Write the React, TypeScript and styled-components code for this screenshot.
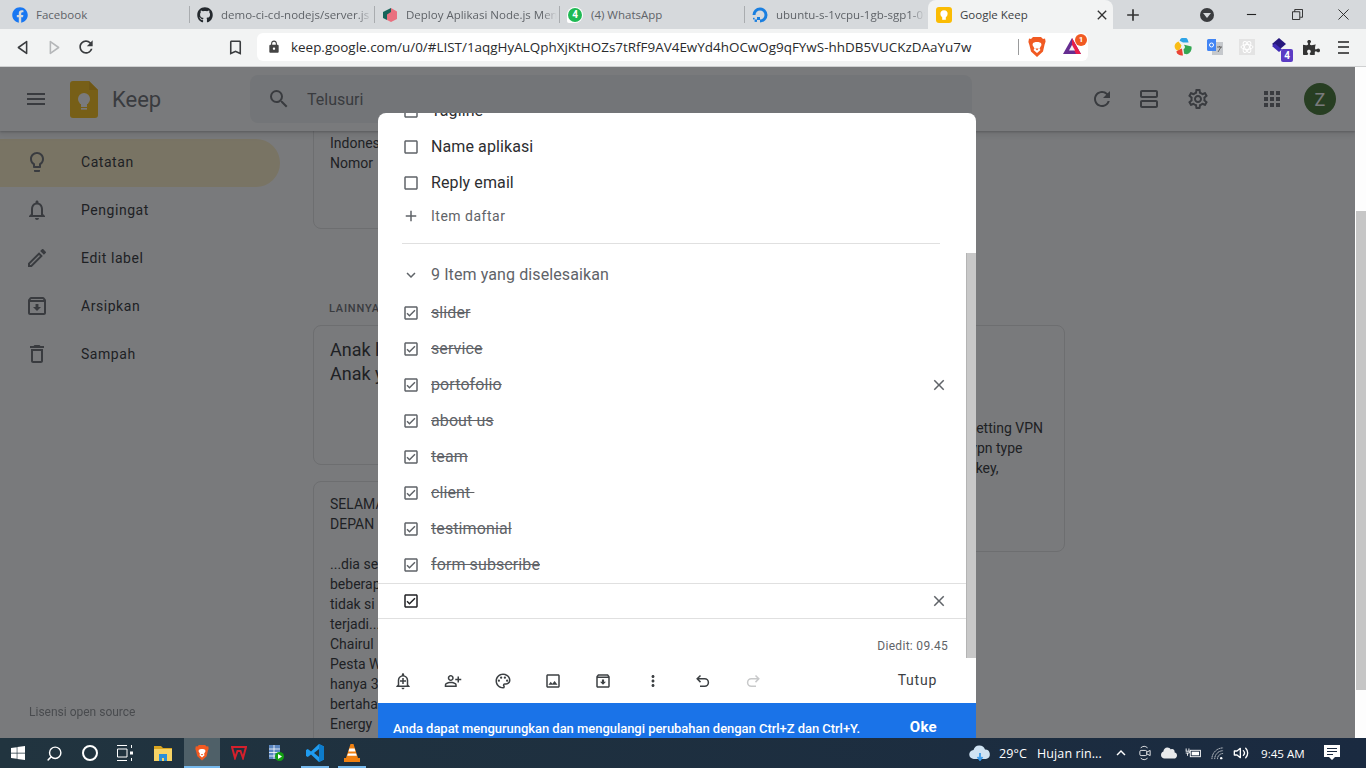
import React from "react";
import styled, { createGlobalStyle } from "styled-components";
import {
  MdMenu, MdSearch, MdLightbulbOutline, MdOutlineNotifications, MdOutlineEdit, MdOutlineArchive,
  MdOutlineDelete, MdRefresh, MdOutlineViewAgenda, MdOutlineSettings, MdApps, MdOutlineAddAlert,
  MdOutlinePersonAddAlt, MdOutlinePalette, MdOutlineImage, MdMoreVert, MdAdd,
  MdExpandMore, MdClose, MdCheckBoxOutlineBlank, MdOutlineCheckBox, MdLock, MdBookmarkBorder,
  MdKeyboardArrowUp,
} from "react-icons/md";
import { FaFacebook, FaGithub, FaPuzzlePiece, FaWindows, FaCloud } from "react-icons/fa";
import { FiVolume2, FiSearch } from "react-icons/fi";

const Global = createGlobalStyle`
  html, body { margin: 0; padding: 0; height: 100%; overflow: hidden; background: #fff; }
  * { box-sizing: border-box; }
  #root { height: 100%; }
`;

const Shell = styled.div`
  height: 768px; width: 1366px; display: flex; flex-direction: column; overflow: hidden;
  font-family: Roboto, "Liberation Sans", sans-serif; color: #202124;
`;

/* browser tab strip */
const TabStrip = styled.div`
  height: 29px; background: #d6d9dc; display: flex; align-items: stretch; flex: none;
  font-family: "Open Sans", "Noto Sans", sans-serif; font-size: 11.5px;
`;
const TabItem = styled.div<{ $w: number; $active?: boolean; $pl?: number }>`
  width: ${p => p.$w}px; flex: none; display: flex; align-items: center; gap: 8px; padding: 0 3px 0 ${p => p.$pl ?? 7}px;
  position: relative; white-space: nowrap; overflow: hidden;
  background: ${p => (p.$active ? "#f2f3f3" : "transparent")};
  border-radius: ${p => (p.$active ? "8px 8px 0 0" : "0")};
  color: ${p => (p.$active ? "#3c4043" : "#5f6368")};
`;
const TabSep = styled.span`
  position: absolute; right: 0; top: 6px; bottom: 6px; width: 1px; background: #a9acaf;
`;
const Favicon = styled.span<{ $c?: string }>`
  width: 16px; height: 16px; flex: none; display: flex; align-items: center; justify-content: center;
  color: ${p => p.$c || "#333"}; font-size: 16px;
`;
const WaBubble = styled.span`
  width: 16px; height: 16px; flex: none; border-radius: 50% 50% 50% 2px; background: #fff; display: flex; align-items: center; justify-content: center;
`;
const WaDisc = styled.span`
  width: 14px; height: 14px; border-radius: 50%; background: #1fb954; color: #fff; display: flex; align-items: center; justify-content: center;
  font: 700 10px/14px Roboto, sans-serif;
`;
const TabLabel = styled.span<{ $fade?: boolean }>`
  flex: 1; min-width: 0; overflow: hidden; white-space: nowrap;
  ${p => p.$fade ? "-webkit-mask-image: linear-gradient(90deg,#000 90%,transparent); mask-image: linear-gradient(90deg,#000 90%,transparent);" : ""}
`;
const TabClose = styled.span`
  flex: none; display: flex; color: #333; font-size: 16px; margin-right: 0;
`;
const NewTab = styled.span`
  width: 40px; display: flex; align-items: center; justify-content: center; font-size: 20px; color: #333; flex: none;
`;
const StripRight = styled.div`
  margin-left: auto; display: flex; align-items: center;
`;
const ProfileDot = styled.span`
  width: 14px; height: 14px; border-radius: 50%; background: #3a3c3f; position: relative; margin-right: 14px;
  &::after { content: ""; position: absolute; left: 3px; top: 5px; border-left: 4px solid transparent; border-right: 4px solid transparent; border-top: 5px solid #d6d9dc; }
`;
const WinBtn = styled.span`
  width: 46px; display: flex; align-items: center; justify-content: center; color: #222; height: 29px;
`;

/* browser toolbar */
const ToolBar = styled.div`
  height: 38px; background: #f2f3f3; border-bottom: 1px solid #cfd0d1; display: flex; align-items: center; flex: none; padding-bottom: 1px;
`;
const NavBtn = styled.span<{ $x: number; $fs?: number }>`
  width: 32px; height: 28px; display: flex; align-items: center; justify-content: center;
  margin-left: ${p => p.$x}px; color: #3a3c3f; flex: none; font-size: ${p => p.$fs || 16}px;
`;
const Omni = styled.div`
  width: 831px; height: 28px; margin-left: 6px; background: #fff; border-radius: 6px; display: flex; align-items: center; flex: none;
  padding-left: 10px; font-family: "Open Sans", "Noto Sans", sans-serif; position: relative;
`;
const LockIcon = styled.span`
  display: flex; color: #444; font-size: 14px; width: 24px; 
`;
const UrlText = styled.span`
  font-size: 13.44px; color: #2a2b2d; white-space: nowrap; width: 727px; overflow: hidden;
`;
const OmniDivider = styled.span`
  width: 1px; height: 16px; background: #9a9b9c; flex: none;
`;
const OmniIcon = styled.span<{ $ml: number }>`
  margin-left: ${p => p.$ml}px; width: 20px; height: 20px; display: flex; position: relative; flex: none;
`;
const CountBadge = styled.span<{ $bg: string }>`
  position: absolute; right: -5px; top: -3px; min-width: 12px; height: 12px; border-radius: 6px; background: ${p => p.$bg};
  color: #fff; font: 700 8px/12px Roboto, sans-serif; text-align: center;
`;
const ExtBadge = styled.span`
  position: absolute; right: 2px; bottom: -4px; width: 12px; height: 13px; border-radius: 2px; background: #5b3bc4;
  color: #fff; font: 700 10px/13px Roboto, sans-serif; text-align: center;
`;
const ExtRow = styled.div`
  display: flex; align-items: center; margin-left: 79px;
`;
const Ext = styled.span<{ $fs?: number }>`
  width: 32px; height: 22px; display: flex; align-items: center; justify-content: center; position: relative; color: #333;
  font-size: ${p => p.$fs || 16}px;
`;
const Burger = styled.span`
  width: 11px; height: 13px; border-top: 2px solid #555; border-bottom: 2px solid #555; position: relative;
  &::after { content: ""; position: absolute; left: 0; right: 0; top: 3.5px; height: 2px; background: #555; }
`;

/* page */
const PageRow = styled.div`
  flex: 1; min-height: 0; display: flex; position: relative;
`;
const Viewport = styled.div`
  flex: 1; min-width: 0; position: relative; overflow: hidden; background: #fff; display: flex; flex-direction: column;
`;
const PageScroll = styled.div`
  width: 11px; flex: none; background: #fdfdfd; border-left: 1px solid #fff; padding-top: 144px;
`;
const PageThumb = styled.div`
  height: 479px; background: #c6c6c6;
`;
const Header = styled.header`
  height: 64px; flex: none; display: flex; align-items: center; background: #fff; position: relative; z-index: 2;
  box-shadow: 0 1px 2px rgba(60,64,67,.3), 0 2px 6px 2px rgba(60,64,67,.15);
`;
const HeaderBtn = styled.span<{ $ml: number; $size?: number }>`
  margin-left: ${p => p.$ml}px; display: flex; color: #5f6368; font-size: ${p => p.$size || 24}px; flex: none;
`;
const LogoWord = styled.span`
  font-size: 22px; color: #5f6368; margin-left: 14px; padding-top: 2px; width: 138px; flex: none; line-height: 1;
`;
const LogoMark = styled.svg`
  width: 28px; height: 37px; margin-left: 22px; flex: none;
`;
const SearchBox = styled.div`
  width: 722px; height: 48px; background: #f1f3f4; border-radius: 8px; display: flex; align-items: center; color: #5f6368; flex: none;
  padding-left: 17px; gap: 16px; font-size: 16px;
`;
const Avatar = styled.span`
  width: 32px; height: 32px; border-radius: 50%; background: #33691e; color: #fff; margin-left: 20px; flex: none;
  display: flex; align-items: center; justify-content: center; font-size: 18px;
`;
const Body = styled.div`
  flex: 1; min-height: 0; display: flex; position: relative; overflow: hidden;
`;
const Sidebar = styled.nav`
  width: 280px; flex: none; padding-top: 8px; display: flex; flex-direction: column; position: relative;
`;
const NavRow = styled.div<{ $active?: boolean }>`
  height: 48px; width: 280px; display: flex; align-items: center; padding: 0 0 2px 25px; gap: 32px;
  background: ${p => (p.$active ? "#feefc3" : "transparent")}; border-radius: 0 24px 24px 0;
  font-size: 14px; font-weight: 400; letter-spacing: .55px; color: #202124;
`;
const NavIcon = styled.span`
  width: 24px; height: 24px; display: flex; font-size: 24px; color: #5f6368; flex: none;
`;
const License = styled.div`
  position: absolute; left: 29px; top: 574px; font-size: 12px; color: #5f6368; opacity: .75;
`;
const Notes = styled.main`
  flex: 1; min-width: 0; padding-left: 33px; display: flex; flex-direction: column; font-size: 14px;
`;
const TopCard = styled.div`
  width: 240px; height: 108px; margin-top: -10px; border: 1px solid #e0e0e0; border-radius: 8px; padding: 11px 16px; line-height: 20px; flex: none;
`;
const SectionLabel = styled.div`
  margin: 71px 0 0 16px; height: 18px; line-height: 18px; font-size: 11px; font-weight: 500; letter-spacing: .8px; color: #5f6368; flex: none;
`;
const Columns = styled.div`
  display: flex; gap: 16px; margin-top: 7px;
`;
const Column = styled.div`
  width: 240px; flex: none; display: flex; flex-direction: column; gap: 16px;
`;
const Card = styled.div<{ $h: number }>`
  height: ${p => p.$h}px; border: 1px solid #e0e0e0; border-radius: 8px; padding: 12px 16px; overflow: hidden; line-height: 20px; flex: none;
  white-space: pre;
`;
const NoteTitle = styled.div`
  font-size: 18px; line-height: 24px;
`;
const Scrim = styled.div`
  position: absolute; inset: 0; background: rgba(32,33,36,.6); z-index: 3;
`;

/* dialog */
const Dialog = styled.section`
  position: absolute; left: 378px; top: 46px; width: 598px; height: 680px; background: #fff; border-radius: 8px; z-index: 4;
  display: flex; flex-direction: column; overflow: hidden;
`;
const DialogMain = styled.div`
  height: 547px; display: flex; flex: none;
`;
const DialogBody = styled.div`
  flex: 1; min-width: 0; overflow: hidden;
`;
const DialogScroll = styled.div`
  width: 10px; flex: none; padding-top: 140px;
`;
const DialogThumb = styled.div`
  height: 405px; background: #c8c8c8; border-left: 1px solid #b4b4b4;
`;
const List = styled.div`
  margin-top: -20px;
`;
const Row = styled.div<{ $active?: boolean }>`
  height: 36px; display: flex; align-items: center; padding-left: 24px; padding-right: 18px;
  ${p => p.$active ? "border-top: 1px solid #e0e0e0; border-bottom: 1px solid #e0e0e0;" : ""}
`;
const Box = styled.span<{ $dark?: boolean }>`
  width: 18px; height: 18px; flex: none; display: flex; font-size: 18px; color: ${p => (p.$dark ? "#202124" : "#5f6368")};
`;
const RowText = styled.span<{ $done?: boolean; $muted?: boolean }>`
  margin-left: 11px; flex: 1; font-size: 16px; letter-spacing: .1px; line-height: 20px; white-space: pre;
  color: ${p => (p.$done || p.$muted ? "#5f6368" : "#2d2e31")};
  text-decoration: ${p => (p.$done ? "line-through" : "none")};
`;
const AddRow = styled.div`
  height: 34px; margin-top: -2px; display: flex; align-items: center; padding-left: 24px; color: #5f6368;
`;
const AddText = styled.span`
  margin-left: 11px; font-size: 14px; letter-spacing: .5px;
`;
const Divider = styled.hr`
  margin: 10px 26px 13px 24px; border: 0; border-top: 1px solid #e0e0e0;
`;
const CompletedHead = styled(Row)`
  margin-bottom: 2px;
`;
const Edited = styled.div`
  height: 41px; padding: 19px 18px 0 0; text-align: right; font-size: 12px; letter-spacing: .3px; line-height: 17px; color: #5f6368;
`;
const DialogBar = styled.div`
  height: 43px; flex: none; display: flex; align-items: center; padding-bottom: 1px;
`;
const ToolBtn = styled.span<{ $off?: boolean }>`
  width: 50px; display: flex; justify-content: center; font-size: 18px; flex: none; color: ${p => (p.$off ? "#c8c9ca" : "#3c4043")};
`;
const CloseBtn = styled.span`
  margin: 0 39px 2px auto; font-size: 14px; font-weight: 400; letter-spacing: .75px; color: #3c4043;
`;
const Snack = styled.div`
  flex: none; height: 50px; background: #1a73e8; color: #fff; display: flex; align-items: center; padding: 0 39px 0 15px;
  justify-content: space-between; font-size: 13px; font-weight: 500; letter-spacing: -.04px;
`;
const SnackAction = styled.span`
  font-size: 15px; font-weight: 700; letter-spacing: .3px; margin-bottom: 2px;
`;

/* windows taskbar */
const Taskbar = styled.footer`
  height: 30px; flex: none; background: linear-gradient(90deg,#21343f,#1a2a40); display: flex; align-items: center; color: #fff;
  font-family: "Open Sans", "Noto Sans", sans-serif; font-size: 12.5px;
`;
const TaskSlot = styled.span<{ $w: number; $ml?: number; $active?: boolean; $open?: boolean }>`
  width: ${p => p.$w}px; margin-left: ${p => p.$ml || 0}px; height: 30px; flex: none; display: flex; align-items: center; justify-content: center; position: relative;
  background: ${p => (p.$active ? "#4f6068" : "transparent")};
  ${p => p.$active || p.$open ? "box-shadow: inset 0 -2px 0 #76b9ed;" : ""}
`;
const Tray = styled.div`
  margin-left: auto; display: flex; align-items: center;
`;
const TrayIcon = styled.span<{ $w: number; $ml?: number }>`
  width: ${p => p.$w}px; margin-left: ${p => p.$ml || 0}px; flex: none; display: flex; justify-content: center; align-items: center; height: 30px;
`;
const TrayText = styled.span<{ $w: number; $ml?: number }>`
  width: ${p => p.$w}px; margin-left: ${p => p.$ml || 0}px; flex: none; white-space: nowrap; letter-spacing: .1px;
`;
const Clock = styled.span`
  width: 61px; padding-left: 8px; flex: none; white-space: nowrap; font-size: 11.6px;
`;

const KeepMark = () => (
  <LogoMark viewBox="0 0 28 37">
    <path d="M3 0h16l9 9v25a3 3 0 0 1-3 3H3a3 3 0 0 1-3-3V3a3 3 0 0 1 3-3z" fill="#fbbc04" />
    <path d="M19 0l9 9h-9z" fill="#e6a800" />
    <circle cx="14" cy="18" r="6" fill="#fff" />
    <rect x="11" y="23" width="6" height="3" fill="#fff" />
    <rect x="11" y="27" width="6" height="1.600" fill="#fff" />
  </LogoMark>
);

const KeepFav = () => (
  <svg viewBox="0 0 16 16" width="16" height="16">
    <rect width="16" height="16" rx="3" fill="#fbbc04" />
    <circle cx="8" cy="6.8" r="3.6" fill="#fff" />
    <rect x="6.2" y="10" width="3.6" height="2.8" fill="#fff" />
  </svg>
);

const DeployFav = () => (
  <svg viewBox="0 0 16 16" width="16" height="16">
    <path d="M9 1l6 3.500V12l-6 3-4-2V7z" fill="#e9707f" />
    <path d="M9 1L1 5v6l4 2V7.500L9 5z" fill="#17645a" />
  </svg>
);

const OceanFav = () => (
  <svg viewBox="0 0 16 16" width="16" height="16">
    <path d="M8 15.500V12.500A4.500 4.500 0 1 0 3.500 8H.5A7.500 7.500 0 1 1 8 15.500z" fill="#1a7fe0" />
    <rect x="5" y="10" width="3" height="3" fill="#1a7fe0" />
    <rect x="2.600" y="12.500" width="2.400" height="2.400" fill="#1a7fe0" />
    <rect x="1" y="10.800" width="1.600" height="1.600" fill="#1a7fe0" />
  </svg>
);

const BraveLion = ({ size = 18 }: { size?: number }) => (
  <svg viewBox="0 0 18 20" width={size} height={size * 20 / 18}>
    <path d="M5 0h8l2 2 2-.5.6 3-1 3-1.600 7L9 20l-6-5.500L1.400 8l-1-3L1 1.500 3 2z" fill="#f15a22" />
    <path d="M5 6l2.500-1h3L13 6l.5 2-2 3.500 1 1.500L9 16l-3.500-3 1-1.500-2-3.500z" fill="#fff" />
    <path d="M7.300 11.500h3.400L9 13.500z" fill="#f15a22" />
  </svg>
);

const BatIcon = () => (
  <svg viewBox="0 0 20 18" width="20" height="18">
    <path d="M10 1L19 17H1z" fill="#662d91" />
    <path d="M10 1l9 16h-5L10 9z" fill="#e81e4a" />
    <path d="M10 8l3 5.500H7z" fill="#f2f3f3" />
  </svg>
);

const ColorExt = () => (
  <svg viewBox="0 0 16 16" width="18" height="18">
    <path d="M5 2.500A4 4 0 0 1 12 1l1 3H8z" fill="#2fa4e7" />
    <path d="M4 3l3 4-3 4.500A5 5 0 0 1 .5 7 5 5 0 0 1 4 3z" fill="#f9bc15" />
    <path d="M2 12l5-3 1 6.500a5 5 0 0 1-6-3.500z" fill="#ea4335" />
    <path d="M9 6l6.500 1.500a6 6 0 0 1-4 7L9 14l-.5-4z" fill="#34a853" />
    <circle cx="8" cy="8" r="1.800" fill="#f2f3f3" />
  </svg>
);

const TranslateExt = () => (
  <svg viewBox="0 0 16 16" width="16" height="16">
    <rect x="5" y="3" width="11" height="13" fill="#c5c8cc" />
    <path d="M1.500 0H9v12H1.500A1.500 1.500 0 0 1 0 10.500v-9A1.500 1.500 0 0 1 1.500 0z" fill="#4285f4" />
    <circle cx="4.500" cy="6" r="2" fill="none" stroke="#fff" strokeWidth="1" />
    <path d="M10 8h5M12.500 7v1M11 13l3-5" stroke="#666" strokeWidth="1" fill="none" />
  </svg>
);

const ReactExt = () => (
  <svg viewBox="0 0 16 16" width="16" height="16">
    <rect width="16" height="16" fill="#e3e3e3" />
    <g fill="none" stroke="#fff" strokeWidth="1">
      <ellipse cx="8" cy="8" rx="6" ry="2.500" />
      <ellipse cx="8" cy="8" rx="6" ry="2.500" transform="rotate(60 8 8)" />
      <ellipse cx="8" cy="8" rx="6" ry="2.500" transform="rotate(120 8 8)" />
    </g>
  </svg>
);

const StackExt = () => (
  <svg viewBox="0 0 18 18" width="18" height="18">
    <path d="M9 0l7 6-7 6-7-6z" fill="#27187e" />
    <path d="M2 8l7 6 3-2.500-7-6z" fill="#3f2bb5" />
  </svg>
);

const BackArrow = ({ c }: { c: string }) => (
  <svg viewBox="0 0 12 16" width="11" height="15" fill="none" stroke={c} strokeWidth="1.700" strokeLinejoin="round">
    <path d="M10.500 1.500v13L1.500 8z" />
  </svg>
);
const ForwardArrow = ({ c }: { c: string }) => (
  <svg viewBox="0 0 12 16" width="11" height="15" fill="none" stroke={c} strokeWidth="1.700" strokeLinejoin="round">
    <path d="M1.500 1.500v13L10.500 8z" />
  </svg>
);

const Restore = () => (
  <svg viewBox="0 0 12 12" width="11" height="11" fill="none" stroke="#222" strokeWidth="1">
    <path d="M.5 3h8v8.500h-8zM3 3V.5h8.500V9H9" />
  </svg>
);
const WinClose = () => (
  <svg viewBox="0 0 12 12" width="11" height="11" fill="none" stroke="#222" strokeWidth="1">
    <path d="M.5.500l11 11M11.500.500l-11 11" />
  </svg>
);
const WinMin = () => (
  <svg viewBox="0 0 12 12" width="11" height="11" fill="none" stroke="#222" strokeWidth="1.200">
    <path d="M1 6h10" />
  </svg>
);

const UndoGlyph = ({ flip }: { flip?: boolean }) => (
  <svg viewBox="0 0 18 18" width="18" height="18" fill="none" stroke="currentColor" strokeWidth="1.500" transform={flip ? "scale(-1 1)" : undefined}>
    <path d="M6.500 3.500L3.200 6.800l3.300 3.300M3.500 6.800h7.200a3.700 3.700 0 0 1 0 7.400H6" />
  </svg>
);

const TaskView = () => (
  <svg viewBox="0 0 16 16" width="16" height="16" fill="none" stroke="#fff" strokeWidth="1">
    <path d="M0 .5h10M0 15.500h10M.5 4h9.500v8H.5zM14.500 0v3M14.500 13v3" />
    <rect x="13" y="6.500" width="3" height="3" fill="#fff" stroke="none" />
  </svg>
);
const Folder = () => (
  <svg viewBox="0 0 18 16" width="18" height="16">
    <path d="M0 1h7l2 2h9v2H0z" fill="#d9a520" />
    <path d="M0 4h18v12H0z" fill="#f6d365" />
    <path d="M5 9h8v7h-3v-3H8v3H5z" fill="#2a8fd8" />
  </svg>
);
const WpsIcon = () => (
  <svg viewBox="0 0 16 14" width="16" height="14" fill="none" stroke="#d5202c" strokeWidth="2">
    <path d="M1 1h14l-3 11-2.500-7h-3L4 12z" />
  </svg>
);
const TablePlay = () => (
  <svg viewBox="0 0 16 16" width="16" height="16">
    <rect x="1" y="0" width="11" height="14" fill="#5a86c0" />
    <path d="M1 4h11M1 7.500h11M1 11h11M6 0v14" stroke="#fff" strokeWidth=".8" />
    <circle cx="11.500" cy="11.500" r="4.500" fill="#12a012" />
    <path d="M10 9l4 2.500L10 14z" fill="#fff" />
  </svg>
);
const VsCode = () => (
  <svg viewBox="0 0 18 18" width="18" height="18">
    <path d="M13 0l5 2.500v13L13 18 5 10.500 1.800 13 0 12V6l1.800-1L5 7.500z" fill="#1f9cf0" />
    <path d="M13 0l5 2.500v13L13 18z" fill="#0d7ccc" />
    <path d="M13 5v8L8 9z" fill="#21343f" />
  </svg>
);
const Vlc = () => (
  <svg viewBox="0 0 16 18" width="16" height="18">
    <path d="M6.500 0h3L14 14H2z" fill="#f08010" />
    <path d="M5.400 4.500h5.200l.9 3H4.500zM3.900 9.500h8.200l.7 2.200H3.200z" fill="#fff" />
    <path d="M0 14h16v4H0z" fill="#f08010" />
  </svg>
);

const WeatherIcon = () => (
  <svg viewBox="0 0 22 16" width="22" height="16">
    <path d="M5 14a4.500 4.500 0 0 1-.5-9A6 6 0 0 1 16 4.500 4.800 4.800 0 0 1 17 14z" fill="#cfe3f3" />
    <path d="M11 8v6M8.500 12l2.500 3 2.500-3" stroke="#3d9be9" strokeWidth="1.800" fill="none" />
  </svg>
);
const MeetIcon = () => (
  <svg viewBox="0 0 14 18" width="12" height="16" fill="none" stroke="#fff" strokeWidth="1">
    <rect x="1" y="6" width="8" height="6" rx="1.500" />
    <path d="M9 8l4-2v6l-4-2M2 3a6 6 0 0 1 8 0M2 15a6 6 0 0 0 8 0" />
  </svg>
);
const BatteryIcon = () => (
  <svg viewBox="0 0 18 12" width="17" height="11" fill="none" stroke="#fff" strokeWidth="1">
    <rect x="5.500" y="2.500" width="11" height="7" />
    <rect x="7" y="4" width="8" height="4" fill="#fff" stroke="none" />
    <path d="M1 .500v3M4 .500v3M.5 3.500h4v2h-4M2.500 5.500v3" />
  </svg>
);
const WifiIcon = () => (
  <svg viewBox="0 0 14 14" width="13" height="13" fill="none" stroke="#d7dadd" strokeWidth="1">
    <path d="M1 13A12 12 0 0 1 13 1M4 13a9 9 0 0 1 9-9M7 13a6 6 0 0 1 6-6" strokeDasharray="1.500 .5" />
    <circle cx="11" cy="12" r="1.300" fill="#fff" stroke="none" />
  </svg>
);
const ActionCenter = () => (
  <svg viewBox="0 0 16 16" width="16" height="16">
    <path d="M0 0h16v12h-5l-3 3-3-3H0z" fill="#fff" />
    <path d="M3 3.500h10M3 6.500h10M3 9.500h6" stroke="#1a2a40" strokeWidth="1" />
  </svg>
);

const nav = [
  { icon: <MdLightbulbOutline />, label: "Catatan", active: true },
  { icon: <MdOutlineNotifications />, label: "Pengingat" },
  { icon: <MdOutlineEdit />, label: "Edit label" },
  { icon: <MdOutlineArchive />, label: "Arsipkan" },
  { icon: <MdOutlineDelete />, label: "Sampah" },
];
const done = ["slider", "service", "portofolio", "about us", "team", "client ", "testimonial", "form subscribe"];

export default function App() {
  return (
    <Shell>
      <Global />
      <TabStrip>
        <TabItem $w={190} $pl={12}><Favicon $c="#1877f2"><FaFacebook /></Favicon><TabLabel>Facebook</TabLabel><TabSep /></TabItem>
        <TabItem $w={185}><Favicon $c="#24292e"><FaGithub /></Favicon><TabLabel $fade>demo-ci-cd-nodejs/server.js at main</TabLabel><TabSep /></TabItem>
        <TabItem $w={185}><Favicon><DeployFav /></Favicon><TabLabel $fade>Deploy Aplikasi Node.js Menggunakan</TabLabel><TabSep /></TabItem>
        <TabItem $w={185}><WaBubble><WaDisc>4</WaDisc></WaBubble><TabLabel>(4) WhatsApp</TabLabel><TabSep /></TabItem>
        <TabItem $w={183}><Favicon><OceanFav /></Favicon><TabLabel $fade>ubuntu-s-1vcpu-1gb-sgp1-01</TabLabel></TabItem>
        <TabItem $w={185} $pl={8} $active><Favicon><KeepFav /></Favicon><TabLabel>Google Keep</TabLabel><TabClose><MdClose /></TabClose></TabItem>
        <NewTab><MdAdd /></NewTab>
        <StripRight>
          <ProfileDot />
          <WinBtn><WinMin /></WinBtn>
          <WinBtn><Restore /></WinBtn>
          <WinBtn><WinClose /></WinBtn>
        </StripRight>
      </TabStrip>
      <ToolBar>
        <NavBtn $x={6}><BackArrow c="#3a3c3f" /></NavBtn>
        <NavBtn $x={0}><ForwardArrow c="#b5b7b9" /></NavBtn>
        <NavBtn $x={0} $fs={20}><MdRefresh /></NavBtn>
        <NavBtn $x={117} $fs={19}><MdBookmarkBorder /></NavBtn>
        <Omni>
          <LockIcon><MdLock /></LockIcon>
          <UrlText>keep.google.com/u/0/#LIST/1aqgHyALQphXjKtHOZs7tRfF9AV4EwYd4hOCwOg9qFYwS-hhDB5VUCKzDAaYu7w</UrlText>
          <OmniDivider />
          <OmniIcon $ml={9}><BraveLion /></OmniIcon>
          <OmniIcon $ml={14}><BatIcon /><CountBadge $bg="#f15a22">1</CountBadge></OmniIcon>
        </Omni>
        <ExtRow>
          <Ext><ColorExt /></Ext>
          <Ext><TranslateExt /></Ext>
          <Ext><ReactExt /></Ext>
          <Ext><StackExt /><ExtBadge>4</ExtBadge></Ext>
          <Ext $fs={17}><FaPuzzlePiece /></Ext>
          <Ext><Burger /></Ext>
        </ExtRow>
      </ToolBar>
      <PageRow>
        <Viewport>
          <Header>
            <HeaderBtn $ml={24}><MdMenu /></HeaderBtn>
            <KeepMark />
            <LogoWord>Keep</LogoWord>
            <SearchBox><MdSearch size={24} /><span>Telusuri</span></SearchBox>
            <HeaderBtn $ml={118}><MdRefresh /></HeaderBtn>
            <HeaderBtn $ml={23}><MdOutlineViewAgenda /></HeaderBtn>
            <HeaderBtn $ml={25}><MdOutlineSettings /></HeaderBtn>
            <HeaderBtn $ml={50}><MdApps /></HeaderBtn>
            <Avatar>Z</Avatar>
          </Header>
          <Body>
            <Sidebar>
              {nav.map(n => (
                <NavRow key={n.label} $active={n.active}>
                  <NavIcon>{n.icon}</NavIcon>
                  <span>{n.label}</span>
                </NavRow>
              ))}
              <License>Lisensi open source</License>
            </Sidebar>
            <Notes>
              <TopCard>Indonesia<br />Nomor</TopCard>
              <SectionLabel>LAINNYA</SectionLabel>
              <Columns>
                <Column>
                  <Card $h={140}>
                    <NoteTitle>Anak laki</NoteTitle>
                    <NoteTitle>Anak yang</NoteTitle>
                  </Card>
                  <Card $h={420}>{"SELAMAT\nDEPAN\n\n...dia sempat\nbeberapa\ntidak si\nterjadi...\nChairul\nPesta W\nhanya 3\nbertahan\nEnergy"}</Card>
                </Column>
                <Column />
                <Column>
                  <Card $h={227}>
                    {"\n\n\n\nLangkah lengkap ke setting VPN\nServer PPT dan pilih vpn type\nMasukkan preshared key,"}
                  </Card>
                </Column>
              </Columns>
            </Notes>
          </Body>
          <Scrim />
          <Dialog>
            <DialogMain>
              <DialogBody>
                <List>
                  {["Tagline", "Name aplikasi", "Reply email"].map(t => (
                    <Row key={t}>
                      <Box><MdCheckBoxOutlineBlank /></Box>
                      <RowText>{t}</RowText>
                    </Row>
                  ))}
                  <AddRow>
                    <Box><MdAdd /></Box>
                    <AddText>Item daftar</AddText>
                  </AddRow>
                  <Divider />
                  <CompletedHead>
                    <Box><MdExpandMore /></Box>
                    <RowText $muted>9 Item yang diselesaikan</RowText>
                  </CompletedHead>
                  {done.map(t => (
                    <Row key={t}>
                      <Box><MdOutlineCheckBox /></Box>
                      <RowText $done>{t}</RowText>
                      {t === "portofolio" && <Box><MdClose /></Box>}
                    </Row>
                  ))}
                  <Row $active>
                    <Box $dark><MdOutlineCheckBox /></Box>
                    <RowText />
                    <Box><MdClose /></Box>
                  </Row>
                  <Edited>Diedit: 09.45</Edited>
                </List>
              </DialogBody>
              <DialogScroll><DialogThumb /></DialogScroll>
            </DialogMain>
            <DialogBar>
              <ToolBtn><MdOutlineAddAlert /></ToolBtn>
              <ToolBtn><MdOutlinePersonAddAlt /></ToolBtn>
              <ToolBtn><MdOutlinePalette /></ToolBtn>
              <ToolBtn><MdOutlineImage /></ToolBtn>
              <ToolBtn><MdOutlineArchive /></ToolBtn>
              <ToolBtn><MdMoreVert /></ToolBtn>
              <ToolBtn><UndoGlyph /></ToolBtn>
              <ToolBtn $off><UndoGlyph flip /></ToolBtn>
              <CloseBtn>Tutup</CloseBtn>
            </DialogBar>
            <Snack>
              <span>Anda dapat mengurungkan dan mengulangi perubahan dengan Ctrl+Z dan Ctrl+Y.</span>
              <SnackAction>Oke</SnackAction>
            </Snack>
          </Dialog>
        </Viewport>
        <PageScroll><PageThumb /></PageScroll>
      </PageRow>
      <Taskbar>
        <TaskSlot $w={36}><FaWindows size={16} /></TaskSlot>
        <TaskSlot $w={36}><FiSearch size={17} transform="scale(-1 1)" /></TaskSlot>
        <TaskSlot $w={36}>
          <svg viewBox="0 0 16 16" width="16" height="16" fill="none" stroke="#fff" strokeWidth="2"><circle cx="8" cy="8" r="7" /></svg>
        </TaskSlot>
        <TaskSlot $w={34}><TaskView /></TaskSlot>
        <TaskSlot $w={42}><Folder /></TaskSlot>
        <TaskSlot $w={36} $active><BraveLion size={14} /></TaskSlot>
        <TaskSlot $w={38}><WpsIcon /></TaskSlot>
        <TaskSlot $w={35}><TablePlay /></TaskSlot>
        <TaskSlot $w={28} $ml={8} $open><VsCode /></TaskSlot>
        <TaskSlot $w={28} $ml={9} $open><Vlc /></TaskSlot>
        <Tray>
          <TrayIcon $w={24}><WeatherIcon /></TrayIcon>
          <TrayText $w={38} $ml={7}>29°C</TrayText>
          <TrayText $w={72}>Hujan rin...</TrayText>
          <TrayIcon $w={24}><MdKeyboardArrowUp size={18} /></TrayIcon>
          <TrayIcon $w={24}><MeetIcon /></TrayIcon>
          <TrayIcon $w={24}><FaCloud size={16} color="#e8eaec" /></TrayIcon>
          <TrayIcon $w={24}><BatteryIcon /></TrayIcon>
          <TrayIcon $w={24}><WifiIcon /></TrayIcon>
          <TrayIcon $w={24}><FiVolume2 size={16} /></TrayIcon>
          <Clock>9:45 AM</Clock>
          <TrayIcon $w={34} $ml={1}><ActionCenter /></TrayIcon>
          <TrayIcon $w={17} />
        </Tray>
      </Taskbar>
    </Shell>
  );
}
